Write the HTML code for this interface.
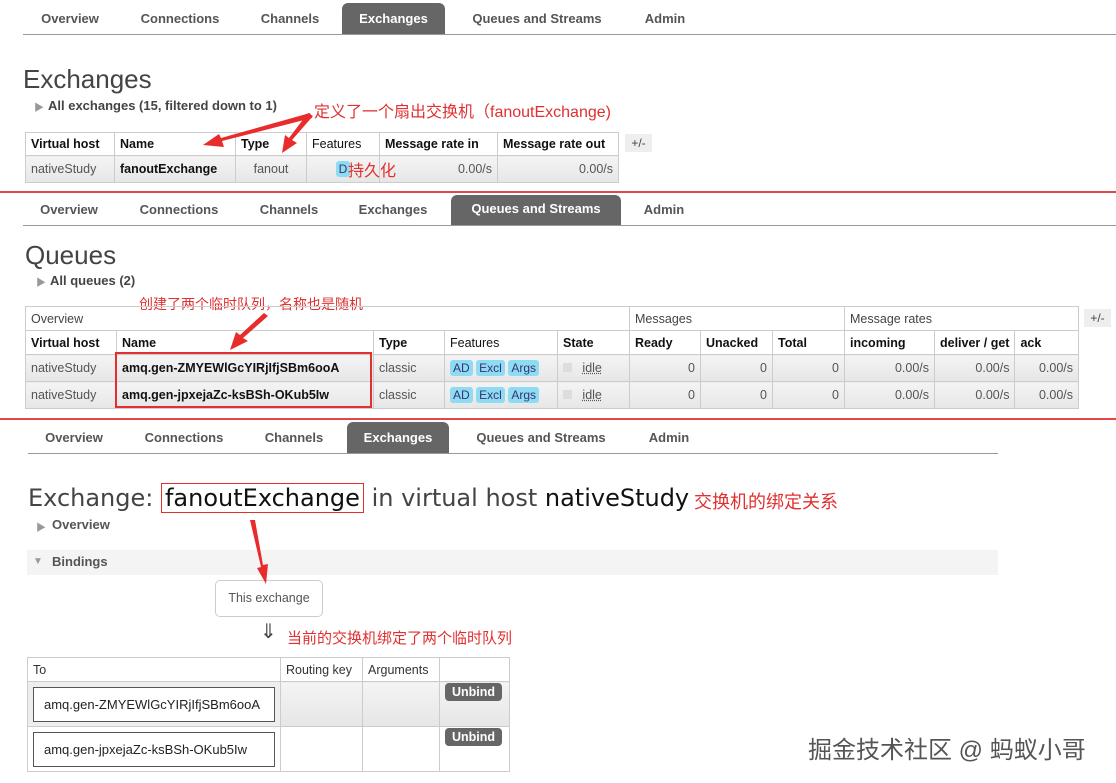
<!DOCTYPE html><html><head><meta charset="utf-8"><style>
body{margin:0;width:1116px;height:783px;background:#fff;position:relative;overflow:hidden;font-family:"Liberation Sans","Noto Sans CJK SC",sans-serif;color:#333}
.a{position:absolute;white-space:nowrap}
.tab{position:absolute;font-size:13px;font-weight:bold;color:#555;transform:translateX(-50%)}
.act{position:absolute;background:#666;color:#fff;font-size:13px;font-weight:bold;text-align:center;border-radius:6px 6px 0 0}
.line{position:absolute;height:1px;background:#999}
.red{color:#e03030}
table{position:absolute;border-collapse:collapse;font-size:12.5px}
td{border:1px solid #ccc;padding:0 5px;white-space:nowrap}
.h td{font-weight:bold;color:#111;background:#fff}
.r td{background:linear-gradient(#f4f4f4,#e6e6e6);color:#555}
.pm{position:absolute;background:#eee;font-size:12px;color:#444;text-align:center}
.bd{background:#8fdcf2;border-radius:3px;padding:1px 3px;color:#337;font-size:12px}
.rl{position:absolute;left:0;width:1116px;height:2px;background:#e24848}
</style></head><body>
<!-- section 1 -->
<div class="tab" style="left:70px;top:11px">Overview</div>
<div class="tab" style="left:180px;top:11px">Connections</div>
<div class="tab" style="left:290px;top:11px">Channels</div>
<div class="act" style="left:342px;top:3px;width:103px;height:31px;line-height:31px">Exchanges</div>
<div class="tab" style="left:537px;top:11px">Queues and Streams</div>
<div class="tab" style="left:665px;top:11px">Admin</div>
<div class="line" style="left:23px;top:34px;width:1093px"></div>
<div class="a" style="left:23px;top:64px;font-size:26px;color:#444">Exchanges</div>
<div class="a" style="left:34px;top:99px;font-size:10px;color:#999">&#9654;</div>
<div class="a" style="left:48px;top:98px;font-size:13px;font-weight:bold;color:#444">All exchanges (15, filtered down to 1)</div>
<div class="a red" style="left:314px;top:98px;font-size:16px">定义了一个扇出交换机（fanoutExchange)</div>
<table style="left:25px;top:132px;width:594px">
<tr class="h" style="height:23px"><td style="width:78px">Virtual host</td><td style="width:110px">Name</td><td style="width:60px">Type</td><td style="font-weight:normal;width:62px">Features</td><td style="width:107px">Message rate in</td><td>Message rate out</td></tr>
<tr class="r" style="height:27px"><td>nativeStudy</td><td style="color:#111;font-weight:bold">fanoutExchange</td><td style="text-align:center">fanout</td><td style="text-align:center"><span class="bd">D</span></td><td style="text-align:right">0.00/s</td><td style="text-align:right">0.00/s</td></tr>
</table>
<div class="a red" style="left:348px;top:157px;font-size:16px">持久化</div>
<div class="pm" style="left:625px;top:134px;width:27px;height:18px;line-height:18px">+/-</div>
<div class="rl" style="top:191px"></div>
<!-- section 2 -->
<div class="tab" style="left:69px;top:202px">Overview</div>
<div class="tab" style="left:179px;top:202px">Connections</div>
<div class="tab" style="left:289px;top:202px">Channels</div>
<div class="tab" style="left:393px;top:202px">Exchanges</div>
<div class="act" style="left:451px;top:195px;width:170px;height:30px;line-height:28px">Queues and Streams</div>
<div class="tab" style="left:664px;top:202px">Admin</div>
<div class="line" style="left:23px;top:225px;width:1093px"></div>
<div class="a" style="left:25px;top:240px;font-size:26px;color:#444">Queues</div>
<div class="a" style="left:36px;top:274px;font-size:10px;color:#999">&#9654;</div>
<div class="a" style="left:50px;top:273px;font-size:13px;font-weight:bold;color:#444">All queues (2)</div>
<div class="a red" style="left:139px;top:294px;font-size:14px">创建了两个临时队列，名称也是随机</div>
<table style="left:25px;top:306px;width:1054px">
<tr style="height:24px"><td colspan="5" style="color:#444">Overview</td><td colspan="3" style="color:#444">Messages</td><td colspan="3" style="color:#444">Message rates</td></tr>
<tr class="h" style="height:24px"><td style="width:80px">Virtual host</td><td style="width:246px">Name</td><td style="width:60px">Type</td><td style="font-weight:normal;width:102px">Features</td><td style="width:61px">State</td><td style="width:60px">Ready</td><td style="width:61px">Unacked</td><td style="width:61px">Total</td><td style="width:79px">incoming</td><td style="width:69px">deliver / get</td><td>ack</td></tr>
<tr class="r" style="height:27px"><td>nativeStudy</td><td style="color:#111;font-weight:bold">amq.gen-ZMYEWlGcYIRjIfjSBm6ooA</td><td>classic</td><td><span class="bd">AD</span> <span class="bd">Excl</span> <span class="bd">Args</span></td><td><span style="display:inline-block;width:9px;height:9px;background:#ddd"></span> &nbsp;&nbsp;<u style="text-decoration-style:dotted">idle</u></td><td style="text-align:right">0</td><td style="text-align:right">0</td><td style="text-align:right">0</td><td style="text-align:right">0.00/s</td><td style="text-align:right">0.00/s</td><td style="text-align:right">0.00/s</td></tr>
<tr class="r" style="height:27px"><td>nativeStudy</td><td style="color:#111;font-weight:bold">amq.gen-jpxejaZc-ksBSh-OKub5Iw</td><td>classic</td><td><span class="bd">AD</span> <span class="bd">Excl</span> <span class="bd">Args</span></td><td><span style="display:inline-block;width:9px;height:9px;background:#ddd"></span> &nbsp;&nbsp;<u style="text-decoration-style:dotted">idle</u></td><td style="text-align:right">0</td><td style="text-align:right">0</td><td style="text-align:right">0</td><td style="text-align:right">0.00/s</td><td style="text-align:right">0.00/s</td><td style="text-align:right">0.00/s</td></tr>
</table>
<div class="a" style="left:115px;top:352px;width:253px;height:52px;border:2px solid #e03030"></div>
<div class="pm" style="left:1084px;top:309px;width:27px;height:18px;line-height:18px">+/-</div>
<div class="rl" style="top:418px"></div>
<!-- section 3 -->
<div class="tab" style="left:74px;top:430px">Overview</div>
<div class="tab" style="left:184px;top:430px">Connections</div>
<div class="tab" style="left:294px;top:430px">Channels</div>
<div class="act" style="left:347px;top:422px;width:102px;height:31px;line-height:31px">Exchanges</div>
<div class="tab" style="left:541px;top:430px">Queues and Streams</div>
<div class="tab" style="left:669px;top:430px">Admin</div>
<div class="line" style="left:28px;top:453px;width:970px"></div>
<div class="a" style="left:28px;top:484px;font-size:24px;color:#444;font-family:'DejaVu Sans',sans-serif">Exchange: <span style="color:#111;border:1px solid #e03030;padding:0 3px">fanoutExchange</span> in virtual host <span style="color:#111">nativeStudy</span></div>
<div class="a red" style="left:694px;top:488px;font-size:18px">交换机的绑定关系</div>
<div class="a" style="left:36px;top:519px;font-size:10px;color:#999">&#9654;</div>
<div class="a" style="left:52px;top:517px;font-size:13px;font-weight:bold;color:#555">Overview</div>
<div class="a" style="left:27px;top:550px;width:971px;height:25px;background:#f4f4f4"></div>
<div class="a" style="left:33px;top:556px;font-size:10px;color:#999">&#9660;</div>
<div class="a" style="left:52px;top:554px;font-size:13px;font-weight:bold;color:#555">Bindings</div>
<div class="a" style="left:215px;top:580px;width:106px;height:35px;border:1px solid #ccc;border-radius:5px;font-size:12.5px;color:#555;text-align:center;line-height:35px">This exchange</div>
<div class="a" style="left:260px;top:619px;font-size:20px;color:#444">&#8659;</div>
<div class="a red" style="left:287px;top:627px;font-size:15px">当前的交换机绑定了两个临时队列</div>
<table style="left:27px;top:657px;width:483px">
<tr style="height:24px;background:#fff"><td style="width:242px">To</td><td style="width:71px">Routing key</td><td style="width:66px">Arguments</td><td></td></tr>
<tr class="r" style="height:45px"><td style="background:#eee"><div style="border:1px solid #555;background:#fff;height:33px;line-height:33px;padding-left:10px;color:#222;font-size:13px">amq.gen-ZMYEWlGcYIRjIfjSBm6ooA</div></td><td></td><td></td><td style="vertical-align:top;padding-top:3px"><span style="background:#666;color:#fff;border-radius:4px;padding:2px 7px;font-weight:bold">Unbind</span></td></tr>
<tr style="height:45px"><td><div style="border:1px solid #555;background:#fff;height:33px;line-height:33px;padding-left:10px;color:#222;font-size:13px">amq.gen-jpxejaZc-ksBSh-OKub5Iw</div></td><td></td><td></td><td style="vertical-align:top;padding-top:3px"><span style="background:#666;color:#fff;border-radius:4px;padding:2px 7px;font-weight:bold">Unbind</span></td></tr>
</table>
<div class="a" style="left:808px;top:730px;font-size:24px;color:#555;text-shadow:0 0 2px #fff">掘金技术社区 @ 蚂蚁小哥</div>
<svg class="a" style="left:0;top:0" width="1116" height="783">
<g fill="#e82c2c">
<polygon points="310,113 312,118 222,141 224,147 203,145 219,134 221,138"/>
<polygon points="308,113 313,116 292,140 297,143 282,153 285,135 289,138"/>
<polygon points="264,313 268,316 243,338 248,341 230,350 236,332 240,335"/>
<polygon points="250,520 255,520 263,565 268,564 266,584 257,568 261,567"/>
</g></svg>
</body></html>
